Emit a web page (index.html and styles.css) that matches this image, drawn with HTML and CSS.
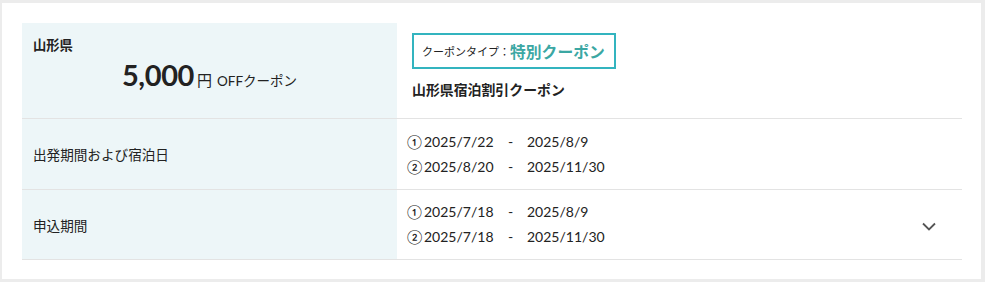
FILE: index.html
```html
<!DOCTYPE html>
<html lang="ja">
<head>
<meta charset="utf-8">
<link rel="stylesheet" href="styles.css">
</head>
<body>
<div class="card">
  <div class="table">
    <div class="row row-head">
      <div class="label">
        <div class="pref">山形県</div>
        <div class="amount"><span class="num">5,000</span><span class="yen">円</span><span class="off">OFFクーポン</span></div>
      </div>
      <div class="value">
        <div class="type-box"><span class="type-label">クーポンタイプ：</span><span class="type-name">特別クーポン</span></div>
        <div class="title">山形県宿泊割引クーポン</div>
      </div>
    </div>
    <div class="row">
      <div class="label label-plain">出発期間および宿泊日</div>
      <div class="value dates">
        <div class="date-line"><span class="circ">①</span><span class="from">2025/7/22</span><span class="dash">-</span><span>2025/8/9</span></div>
        <div class="date-line"><span class="circ">②</span><span class="from">2025/8/20</span><span class="dash">-</span><span>2025/11/30</span></div>
      </div>
    </div>
    <div class="row row-last">
      <div class="label label-plain">申込期間</div>
      <div class="value dates">
        <div class="date-line"><span class="circ">①</span><span class="from">2025/7/18</span><span class="dash">-</span><span>2025/8/9</span></div>
        <div class="date-line"><span class="circ">②</span><span class="from">2025/7/18</span><span class="dash">-</span><span>2025/11/30</span></div>
        <svg class="chev" width="14" height="9" viewBox="0 0 14 9"><path d="M1 1.5 L7 7.5 L13 1.5" fill="none" stroke="#555" stroke-width="1.8"/></svg>
      </div>
    </div>
  </div>
</div>
</body>
</html>
```

FILE: styles.css
```css
html, body {
  margin: 0;
  padding: 0;
}
body {
  background: #ececec;
  width: 985px;
  height: 282px;
  font-family: Lato, "Noto Sans CJK JP", sans-serif;
  color: #222;
  padding: 3px 4px 3px 2px;
  box-sizing: border-box;
}
.card {
  background: #fff;
  height: 276px;
  box-sizing: border-box;
  padding: 20px 19px 0 20px;
}
.table {
  display: flex;
  flex-direction: column;
}
.row {
  display: grid;
  grid-template-columns: 375px 1fr;
  border-bottom: 1px solid #e3e3e3;
  height: 70px;
  box-sizing: content-box;
}
.row-head {
  height: 95px;
}
.row-last {
  height: 69px;
}
.label {
  background: #edf6f8;
  padding: 0 11px;
}
.label-plain {
  display: flex;
  align-items: center;
  font-size: 13.6px;
}
.pref {
  font-size: 13.3px;
  font-weight: bold;
  margin-top: 13px;
  line-height: 18px;
}
.amount {
  text-align: center;
  line-height: 32px;
  margin-top: 5px;
  white-space: nowrap;
}
.num {
  font-size: 29px;
  font-weight: 700;
  letter-spacing: -0.4px;
}
.yen {
  font-size: 15px;
  margin-left: 3px;
}
.off {
  font-size: 13.5px;
  margin-left: 5px;
}
.value {
  padding-left: 11px;
  position: relative;
}
.type-box {
  display: inline-flex;
  align-items: center;
  border: 2px solid #33b4bf;
  height: 36px;
  padding: 0 8px 0 8px;
  margin-top: 10px;
  margin-left: 4px;
  box-sizing: border-box;
  width: 204px;
  white-space: nowrap;
}
.type-label {
  font-size: 11px;
}
.type-name {
  font-size: 15.8px;
  font-weight: bold;
  color: #3ba7a3;
}
.title {
  font-size: 13.9px;
  font-weight: bold;
  margin-top: 10px;
  margin-left: 4px;
}
.dates {
  display: flex;
  flex-direction: column;
  justify-content: center;
  gap: 5px;
  font-size: 14px;
  padding-left: 10px;
}
.date-line {
  display: flex;
  align-items: center;
  line-height: 20px;
}
.circ {
  font-size: 14px;
  width: 17px;
}
.from {
  width: 84px;
}
.dash {
  width: 19px;
}
.chev {
  position: absolute;
  right: 26px;
  top: 32px;
}
```
